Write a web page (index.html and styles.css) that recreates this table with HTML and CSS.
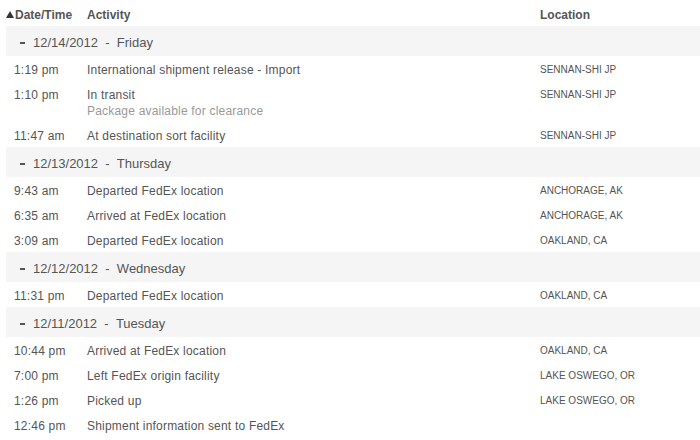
FILE: index.html
```html
<!DOCTYPE html>
<html>
<head>
<meta charset="utf-8">
<link rel="stylesheet" href="styles.css">
</head>
<body>
<div class="travel">
  <div class="head row">
    <div class="col-time"><svg class="sort" width="8" height="7" viewBox="0 0 8 7"><path d="M0 7 L4 0 L8 7 Z" fill="#333"/></svg>Date/Time</div>
    <div>Activity</div>
    <div>Location</div>
  </div>

  <div class="group"><span class="minus"></span>12/14/2012&nbsp;&nbsp;-&nbsp;&nbsp;Friday</div>
  <div class="row"><div>1:19 pm</div><div>International shipment release - Import</div><div class="loc">SENNAN-SHI JP</div></div>
  <div class="row"><div>1:10 pm</div><div>In transit<div class="sub">Package available for clearance</div></div><div class="loc">SENNAN-SHI JP</div></div>
  <div class="row"><div>11:47 am</div><div>At destination sort facility</div><div class="loc">SENNAN-SHI JP</div></div>

  <div class="group"><span class="minus"></span>12/13/2012&nbsp;&nbsp;-&nbsp;&nbsp;Thursday</div>
  <div class="row"><div>9:43 am</div><div>Departed FedEx location</div><div class="loc">ANCHORAGE, AK</div></div>
  <div class="row"><div>6:35 am</div><div>Arrived at FedEx location</div><div class="loc">ANCHORAGE, AK</div></div>
  <div class="row"><div>3:09 am</div><div>Departed FedEx location</div><div class="loc">OAKLAND, CA</div></div>

  <div class="group"><span class="minus"></span>12/12/2012&nbsp;&nbsp;-&nbsp;&nbsp;Wednesday</div>
  <div class="row"><div>11:31 pm</div><div>Departed FedEx location</div><div class="loc">OAKLAND, CA</div></div>

  <div class="group"><span class="minus"></span>12/11/2012&nbsp;&nbsp;-&nbsp;&nbsp;Tuesday</div>
  <div class="row"><div>10:44 pm</div><div>Arrived at FedEx location</div><div class="loc">OAKLAND, CA</div></div>
  <div class="row"><div>7:00 pm</div><div>Left FedEx origin facility</div><div class="loc">LAKE OSWEGO, OR</div></div>
  <div class="row"><div>1:26 pm</div><div>Picked up</div><div class="loc">LAKE OSWEGO, OR</div></div>
  <div class="row"><div>12:46 pm</div><div>Shipment information sent to FedEx</div><div class="loc"></div></div>
</div>
</body>
</html>
```
FILE: styles.css
```css
html, body {
  margin: 0;
  padding: 0;
  background: #fff;
}
body {
  font-family: "Liberation Sans", Arial, sans-serif;
  font-size: 12px;
  color: #555;
}
.travel {
  padding-left: 6px;
}
.row {
  display: grid;
  grid-template-columns: 73px 453px 1fr;
  padding: 6px 0 3px 8px;
  line-height: 16px;
  letter-spacing: 0.2px;
}
.head {
  padding: 7px 0 3px 0;
  font-weight: bold;
  font-size: 12px;
  color: #555;
  letter-spacing: 0;
  grid-template-columns: 81px 453px 1fr;
}
.head .col-time {
  display: flex;
  align-items: center;
}
.sort {
  display: block;
  margin-right: 1px;
  margin-top: -1px;
}
.group {
  background: #f5f5f5;
  height: 30px;
  display: flex;
  align-items: center;
  padding-left: 14px;
  font-size: 13px;
  color: #555;
  padding-top: 3px;
  box-sizing: border-box;
}
.minus {
  display: inline-block;
  width: 5px;
  height: 2px;
  background: #555;
  margin-right: 8px;
}
.sub {
  color: #999;
}
.loc {
  font-size: 10px;
  color: #555;
  letter-spacing: 0;
  text-transform: uppercase;
}
```
